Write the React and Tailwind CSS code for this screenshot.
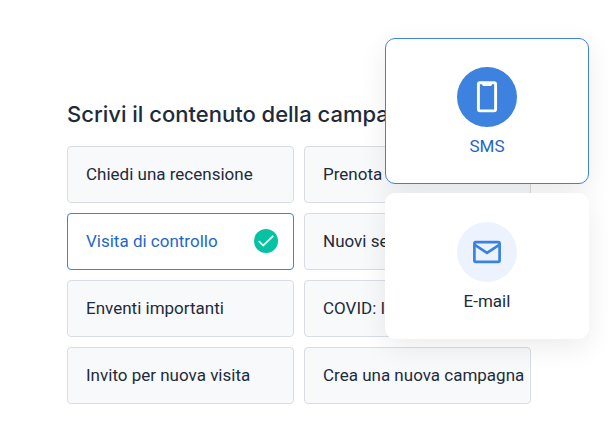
import { useState } from 'react';
import clsx from 'clsx';

const templates = [
  'Chiedi una recensione',
  'Prenota visita',
  'Visita di controllo',
  'Nuovi servizi',
  'Enventi importanti',
  'COVID: Info',
  'Invito per nuova visita',
  'Crea una nuova campagna',
];

const channels = [
  { id: 'sms', label: 'SMS', icon: PhoneIcon },
  { id: 'email', label: 'E-mail', icon: MailIcon },
];

function CheckBadge() {
  return (
    <svg viewBox="0 0 24 24" className="size-6 shrink-0" aria-hidden="true">
      <circle cx="12" cy="12" r="12" fill="#06c2a3" />
      <path d="M4.8 12.2 9.2 16.6 19.2 6.8" fill="none" stroke="#fff" strokeWidth="1.8" />
    </svg>
  );
}

function PhoneIcon() {
  return (
    <svg viewBox="0 0 32 32" className="size-8" fill="none" stroke="#fff" aria-hidden="true">
      <rect x="7.4" y="1.7" width="17.2" height="28.2" rx="1.6" strokeWidth="2.9" />
      <path d="M10.8 3h10.4l-1.2 2.1h-8z" fill="#fff" stroke="none" />
    </svg>
  );
}

function MailIcon() {
  return (
    <svg viewBox="0 0 32 32" className="size-8" fill="none" stroke="#3b82e0" strokeWidth="2.7" aria-hidden="true">
      <rect x="3.4" y="6.2" width="25.2" height="19.6" rx="1.4" />
      <path d="M3.8 8.8 16 16.8 28.2 8.8" />
    </svg>
  );
}

export default function App() {
  const [template, setTemplate] = useState('Visita di controllo');
  const [channel, setChannel] = useState('sms');

  return (
    <main className="relative overflow-hidden bg-white pt-[100px] pr-[77px] pb-11 pl-[67px] font-['Roboto',sans-serif] text-[17px] leading-6 text-[#1e2b3a]">
      <h1 className="mb-[18px] font-['Inter',sans-serif] text-[22px] leading-7 font-medium whitespace-nowrap">
        Scrivi il contenuto della campagna
      </h1>

      <div className="grid grid-cols-2 gap-[10px]">
        {templates.map((name) => (
          <button
            key={name}
            type="button"
            aria-pressed={template === name}
            onClick={() => setTemplate(name)}
            className={clsx(
              'flex h-[57px] items-center justify-between rounded border pr-[15px] pb-px pl-[18px] text-left whitespace-nowrap',
              template === name
                ? 'border-[#3f82de] bg-white text-[#1f66cc]'
                : 'border-[#d9dde3] bg-[#f8f9fb]'
            )}
          >
            {name}
            {template === name && <CheckBadge />}
          </button>
        ))}
      </div>

      <div className="absolute top-[38px] right-[19px] flex w-[204px] flex-col gap-[9px]">
        {channels.map(({ id, label, icon: Icon }) => (
          <button
            key={id}
            type="button"
            aria-pressed={channel === id}
            onClick={() => setChannel(id)}
            className={clsx(
              'flex h-[146px] flex-col items-center gap-[7px] rounded-[10px] border bg-white pt-7 shadow-[0_8px_28px_rgba(0,0,0,0.08)]',
              channel === id ? 'border-[#3f82de] text-[#1f66cc]' : 'border-white'
            )}
          >
            <span
              className={clsx(
                'flex size-15 items-center justify-center rounded-full',
                id === 'sms' ? 'bg-[#3d82df]' : 'bg-[#ecf3fe]'
              )}
            >
              <Icon />
            </span>
            {label}
          </button>
        ))}
      </div>
    </main>
  );
}
